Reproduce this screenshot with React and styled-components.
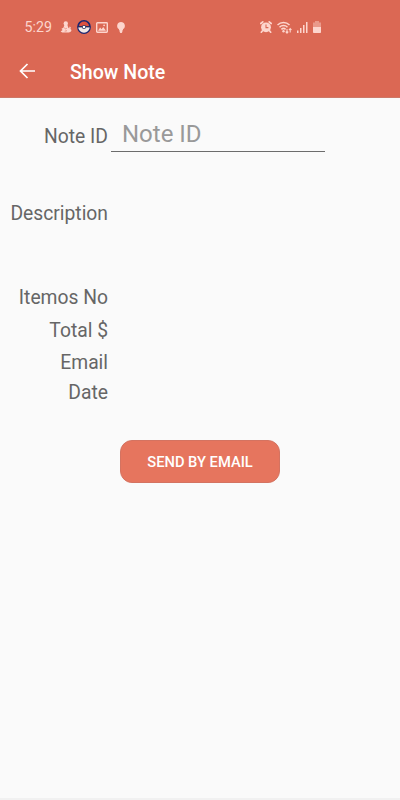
import React from 'react';
import styled, { createGlobalStyle, ThemeProvider } from 'styled-components';

const theme = {
  primary: '#db6854',
  button: '#e6755e',
  background: '#fafafa',
  icon: '#fdd5cd',
  text: '#666',
  font: "Roboto, 'Liberation Sans', sans-serif"
};

const GlobalStyle = createGlobalStyle`
  * {
    box-sizing: border-box;
  }
  body {
    margin: 0;
    background: ${props => props.theme.background};
    font-family: ${props => props.theme.font};
  }
`;

const Screen = styled.div`
  display: flex;
  flex-direction: column;
  height: 800px;
  overflow: hidden;
  background: ${props => props.theme.background};
`;

const Header = styled.header`
  flex: none;
  height: 98px;
  background: ${props => props.theme.primary};
  border-bottom: 1px solid #cd7868;
`;

const StatusBar = styled.div`
  display: flex;
  align-items: center;
  justify-content: space-between;
  height: 46px;
  padding: 8px 79px 0 24px;
  color: ${props => props.theme.icon};
`;

const Clock = styled.span`
  width: 31px;
  padding-left: 0.5px;
  font-size: 14.2px;
  line-height: 16px;
`;

const IconGroup = styled.div`
  display: flex;
  align-items: center;
  gap: 5px;

  svg {
    display: block;
  }
`;

const Toolbar = styled.div`
  display: flex;
  align-items: center;
  height: 51px;
  padding-left: 19px;
`;

const BackButton = styled.button`
  width: 51px;
  height: 32px;
  padding: 0;
  border: 0;
  background: none;
  color: #fff;
  text-align: left;

  svg {
    display: block;
  }
`;

const Title = styled.h1`
  margin: 0;
  padding-top: 2px;
  color: #fff;
  font-size: 19.6px;
  font-weight: 500;
  line-height: 24px;
`;

const Form = styled.main`
  display: flex;
  flex: 1;
  flex-direction: column;
  padding-top: 22px;
`;

const Row = styled.div`
  display: flex;
  align-items: center;
  height: ${props => props.$height || 22}px;
  margin-top: ${props => props.$top || 0}px;
`;

const Label = styled.label`
  width: 108px;
  padding-top: 2px;
  color: ${props => props.theme.text};
  font-size: 19.3px;
  line-height: 22px;
  text-align: right;
`;

const Input = styled.input`
  width: 214px;
  height: 32px;
  margin: 0 0 0 3px;
  padding: 0 11px 4px;
  border: 0;
  border-bottom: 1px solid #6c6c6c;
  border-radius: 0;
  outline: 0;
  background: transparent;
  color: ${props => props.theme.text};
  font-family: inherit;
  font-size: 24px;

  &::placeholder {
    color: #999;
    opacity: 1;
  }
`;

const SendButton = styled.button`
  align-self: center;
  width: 160px;
  height: 43px;
  margin-top: 37px;
  padding: 1px 0 0;
  border: 1px solid #d47361;
  border-radius: 12px;
  background: ${props => props.theme.button};
  color: #fff;
  font-family: inherit;
  font-size: 14.7px;
  font-weight: 500;
  text-transform: uppercase;
`;

const BottomEdge = styled.div`
  height: 2px;
  background: #f1f1f1;
`;

const FigureIcon = () => (
  <svg width="12" height="12" viewBox="0 0 12 12" fill="currentColor">
    <circle cx="5.8" cy="2.5" r="2.2" />
    <path d="M4.4 4h3l.8 2.6.9 1 .5-2 1.2.6-.3 1.9 1 1-.5 1.5-2 .9H2.2L.6 10.6 2.6 9 1.4 7.7l2-.9z" />
    <path d="M4.2 6.8l1.2 1 1.4-.5M4.7 10.2l2.3-.5" stroke="#db6854" strokeWidth=".6" fill="none" />
  </svg>
);

const BallIcon = () => (
  <svg width="14" height="14" viewBox="0 0 14 14">
    <circle cx="7" cy="7" r="6.9" fill="#1c2670" />
    <path d="M2 6.2a5 4.7 0 0 1 10 0z" fill="#df5140" />
    <path d="M1.3 7.3h11.4A5.7 5.3 0 0 1 7 12.7a5.7 5.3 0 0 1-5.7-5.4z" fill="#f3e8e6" />
    <path d="M1 6.7h12" stroke="#242b57" strokeWidth="1" />
    <circle cx="7" cy="7" r="2" fill="#242b57" />
    <circle cx="7" cy="7" r="1.3" fill="#fff" />
  </svg>
);

const PictureIcon = () => (
  <svg width="12" height="11" viewBox="0 0 12 11">
    <rect x=".7" y=".7" width="10.6" height="9.6" rx=".7" fill="none" stroke="currentColor" strokeWidth="1.4" />
    <path d="M2 8.8l2.1-3.2 1.5 1.6 1.6-2.1L10 8.8z" fill="currentColor" />
    <circle cx="8.1" cy="3.3" r=".9" fill="currentColor" />
  </svg>
);

const BulbIcon = () => (
  <svg width="12" height="11" viewBox="-4 0 12 11" fill="currentColor">
    <path d="M4 0a3.9 3.9 0 0 0-2 7.2V8.2h4v-1A3.9 3.9 0 0 0 4 0zM2.6 8.2h2.8v1.5L4.7 11H3.3l-.7-1.3z" />
  </svg>
);

const AlarmIcon = () => (
  <svg width="12" height="12" viewBox="0 0 12 12">
    <circle cx="6" cy="6.3" r="4.9" fill="currentColor" />
    <path
      d="M.8 2.5L2.8.9M11.2 2.5L9.2.9M2.5 9.8l-1.2 1.4M9.5 9.8l1.2 1.4"
      stroke="currentColor"
      strokeWidth="1.7"
      strokeLinecap="round"
    />
    <path d="M6 3.6v3h2.4" stroke="#db6854" strokeWidth="1.1" fill="none" />
  </svg>
);

const WifiIcon = () => (
  <svg width="15" height="13" viewBox="0 0 15 13" fill="none" stroke="currentColor">
    <path d="M.5 4a8.3 8.3 0 0 1 12 0M2.5 6.2a5.6 5.6 0 0 1 8 0M4.4 8.4a3 3 0 0 1 4.2 0" strokeWidth="1.5" />
    <circle cx="6.5" cy="10.3" r="1.2" fill="currentColor" stroke="none" />
    <path d="M10 8v4M8.7 10.6l1.3 1.5 1.3-1.5M13.2 11.6V7.6M11.9 9l1.3-1.5L14.5 9" strokeWidth="1.1" />
  </svg>
);

const SignalIcon = () => (
  <svg width="11" height="12" viewBox="0 0 11 12" fill="currentColor">
    <rect x="0" y="9.5" width="1.5" height="2.5" />
    <rect x="3" y="7" width="1.5" height="5" />
    <rect x="6" y="4" width="1.5" height="8" />
    <rect x="9" y="1" width="1.5" height="11" />
  </svg>
);

const BatteryIcon = () => (
  <svg width="8" height="12" viewBox="0 0 8 12" fill="currentColor">
    <path d="M2 0h4v1.5h2V6H0V1.5h2z" opacity=".45" />
    <path d="M0 6h8v5.2a.8.8 0 0 1-.8.8H.8a.8.8 0 0 1-.8-.8z" />
  </svg>
);

const ArrowIcon = () => (
  <svg
    width="18"
    height="32"
    viewBox="0 0 18 32"
    fill="none"
    stroke="currentColor"
    strokeWidth="1.7"
  >
    <path d="M16 15H2M8.5 8L1.5 15l7 7" />
  </svg>
);

const rows = [
  { label: 'Description', top: 50 },
  { label: 'Itemos No', top: 62 },
  { label: 'Total $', top: 11 },
  { label: 'Email', top: 10 },
  { label: 'Date', top: 8 }
];

const App = () => (
  <ThemeProvider theme={theme}>
    <GlobalStyle />
    <Screen>
      <Header>
        <StatusBar>
          <IconGroup>
            <Clock>5:29</Clock>
            <FigureIcon />
            <BallIcon />
            <PictureIcon />
            <BulbIcon />
          </IconGroup>
          <IconGroup>
            <AlarmIcon />
            <WifiIcon />
            <SignalIcon />
            <BatteryIcon />
          </IconGroup>
        </StatusBar>
        <Toolbar>
          <BackButton aria-label="Back">
            <ArrowIcon />
          </BackButton>
          <Title>Show Note</Title>
        </Toolbar>
      </Header>
      <Form>
        <Row $height={32}>
          <Label htmlFor="noteId">Note ID</Label>
          <Input id="noteId" placeholder="Note ID" />
        </Row>
        {rows.map(row => (
          <Row key={row.label} $top={row.top}>
            <Label>{row.label}</Label>
          </Row>
        ))}
        <SendButton>Send by Email</SendButton>
      </Form>
      <BottomEdge />
    </Screen>
  </ThemeProvider>
);

export default App;
